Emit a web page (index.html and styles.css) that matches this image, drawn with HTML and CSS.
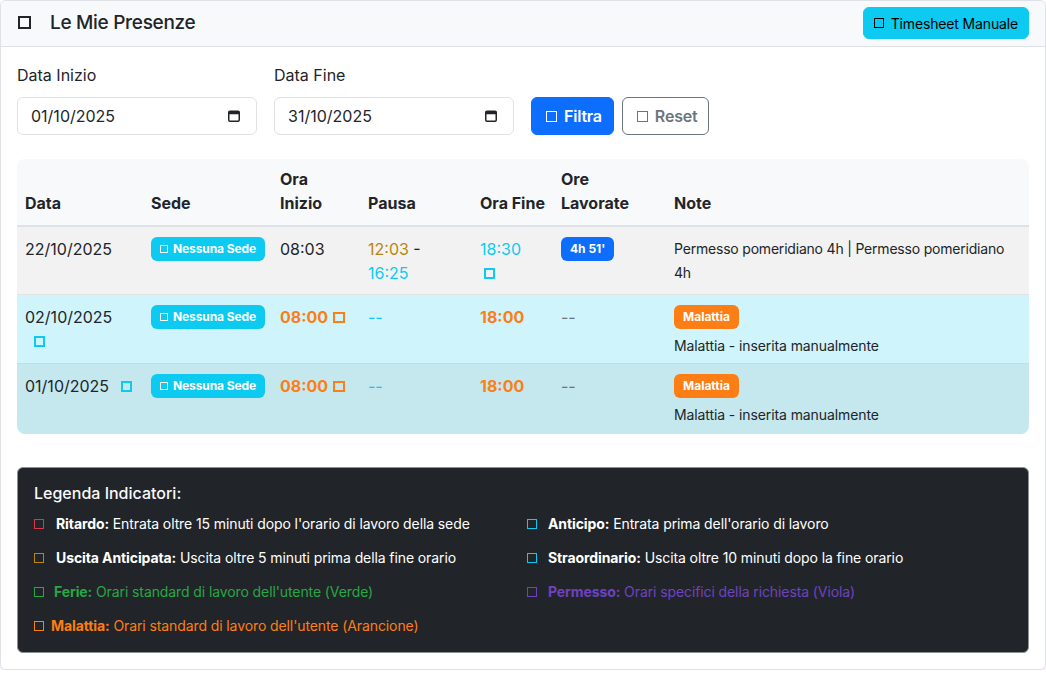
FILE: index.html
```html
<!DOCTYPE html>
<html lang="it">
<head>
<meta charset="utf-8">
<title>Le Mie Presenze</title>
<link rel="stylesheet" href="styles.css">
</head>
<body>
<div class="card">
  <div class="card-header">
    <h5 class="title"><span class="ico ico-title"></span>Le Mie Presenze</h5>
    <button class="btn btn-info"><span class="ico ico-btn-sm"></span>Timesheet Manuale</button>
  </div>
  <div class="card-body">
    <div class="filters">
      <div class="field">
        <label class="label">Data Inizio</label>
        <div class="date-input"><span>01/10/2025</span><svg class="cal" width="12" height="12" viewBox="0 0 12 12"><rect x="0.75" y="1.25" width="10.5" height="10" rx="1.2" fill="none" stroke="#212529" stroke-width="1.5"/><rect x="0.75" y="1.25" width="10.5" height="3" fill="#212529"/></svg></div>
      </div>
      <div class="field">
        <label class="label">Data Fine</label>
        <div class="date-input"><span>31/10/2025</span><svg class="cal" width="12" height="12" viewBox="0 0 12 12"><rect x="0.75" y="1.25" width="10.5" height="10" rx="1.2" fill="none" stroke="#212529" stroke-width="1.5"/><rect x="0.75" y="1.25" width="10.5" height="3" fill="#212529"/></svg></div>
      </div>
      <div class="actions">
        <button class="btn btn-primary"><span class="ico ico-btn"></span>Filtra</button>
        <button class="btn btn-outline"><span class="ico ico-btn"></span>Reset</button>
      </div>
    </div>

    <div class="table-wrap">
      <table class="grid">
        <colgroup>
          <col class="c-data"><col class="c-sede"><col class="c-inizio"><col class="c-pausa"><col class="c-fine"><col class="c-ore"><col class="c-note">
        </colgroup>
        <thead>
          <tr>
            <th>Data</th>
            <th>Sede</th>
            <th>Ora<br>Inizio</th>
            <th>Pausa</th>
            <th class="nowrap">Ora Fine</th>
            <th>Ore<br>Lavorate</th>
            <th>Note</th>
          </tr>
        </thead>
        <tbody>
          <tr class="row-striped">
            <td>22/10/2025</td>
            <td><span class="badge badge-info"><span class="ico ico-badge"></span>Nessuna Sede</span></td>
            <td>08:03</td>
            <td><span class="t-gold">12:03</span> -<br><span class="t-cyan">16:25</span></td>
            <td><span class="t-cyan">18:30</span><div class="icon-line"><span class="ico ico-cyan ico-indent"></span></div></td>
            <td><span class="badge badge-primary">4h 51'</span></td>
            <td class="note-small">Permesso pomeridiano 4h | Permesso pomeridiano 4h</td>
          </tr>
          <tr class="row-info">
            <td>02/10/2025<div class="icon-line"><span class="ico ico-cyan ico-date"></span></div></td>
            <td><span class="badge badge-info"><span class="ico ico-badge"></span>Nessuna Sede</span></td>
            <td><span class="t-orange-b">08:00</span><span class="ico ico-orange"></span></td>
            <td><span class="t-cyan">--</span></td>
            <td><span class="t-orange-b">18:00</span></td>
            <td><span class="t-muted">--</span></td>
            <td><div class="badge-line"><span class="badge badge-orange">Malattia</span></div><div class="note-text">Malattia - inserita manualmente</div></td>
          </tr>
          <tr class="row-info-striped">
            <td>01/10/2025<span class="ico ico-cyan ico-date-inline"></span></td>
            <td><span class="badge badge-info"><span class="ico ico-badge"></span>Nessuna Sede</span></td>
            <td><span class="t-orange-b">08:00</span><span class="ico ico-orange"></span></td>
            <td><span class="t-cyan">--</span></td>
            <td><span class="t-orange-b">18:00</span></td>
            <td><span class="t-muted">--</span></td>
            <td><div class="badge-line"><span class="badge badge-orange">Malattia</span></div><div class="note-text">Malattia - inserita manualmente</div></td>
          </tr>
        </tbody>
      </table>
    </div>

    <div class="legend">
      <h6 class="legend-title">Legenda Indicatori:</h6>
      <div class="legend-grid">
        <div class="legend-col">
          <div class="legend-item"><span class="ico ico-leg ico-red gap12"></span><strong>Ritardo:</strong> Entrata oltre 15 minuti dopo l'orario di lavoro della sede</div>
          <div class="legend-item"><span class="ico ico-leg ico-gold gap12"></span><strong>Uscita Anticipata:</strong> Uscita oltre 5 minuti prima della fine orario</div>
          <div class="legend-item t-green"><span class="ico ico-leg gap10"></span><strong>Ferie:</strong> Orari standard di lavoro dell'utente (Verde)</div>
          <div class="legend-item t-orange"><span class="ico ico-leg gap7"></span><strong>Malattia:</strong> Orari standard di lavoro dell'utente (Arancione)</div>
        </div>
        <div class="legend-col">
          <div class="legend-item"><span class="ico ico-leg ico-cyan gap11"></span><strong>Anticipo:</strong> Entrata prima dell'orario di lavoro</div>
          <div class="legend-item"><span class="ico ico-leg ico-cyan gap11"></span><strong>Straordinario:</strong> Uscita oltre 10 minuti dopo la fine orario</div>
          <div class="legend-item t-purple"><span class="ico ico-leg gap11"></span><strong>Permesso:</strong> Orari specifici della richiesta (Viola)</div>
        </div>
      </div>
    </div>
  </div>
</div>
</body>
</html>
```

FILE: styles.css
```css
* { box-sizing: border-box; }

html, body {
  margin: 0;
  background: #fff;
}

body {
  font-family: Inter, "Noto Sans", "Liberation Sans", sans-serif;
  font-size: 16px;
  line-height: 1.5;
  color: #212529;
}

/* generic "tofu" icon */
.ico {
  display: inline-block;
  width: 0.68em;
  height: 0.68em;
  border: 0.12em solid currentColor;
  vertical-align: baseline;
}

.card {
  width: 1046px;
  background: #fff;
  border: 1px solid #dee2e6;
  border-radius: 6px;
  box-shadow: 0 2px 4px rgba(0, 0, 0, 0.08);
}

.card-header {
  display: flex;
  align-items: center;
  justify-content: space-between;
  height: 46px;
  padding: 0 16px 0 17px;
  background: #f8f9fa;
  border-bottom: 1px solid #dee2e6;
  border-radius: 5px 5px 0 0;
}

.title {
  margin: 0;
  font-size: 19px;
  font-weight: 500;
  line-height: 1.2;
  letter-spacing: -0.3px;
  color: #212529;
}

.ico-title {
  width: 13px;
  height: 13px;
  border-width: 2px;
  margin-right: 19px;
}

.btn {
  font-family: inherit;
  display: inline-flex;
  align-items: center;
  border: 1px solid transparent;
  border-radius: 6px;
  cursor: pointer;
}

.btn-info {
  height: 32px;
  margin-top: -1px;
  padding: 0 10px 0 10px;
  font-size: 14px;
  letter-spacing: -0.15px;
  background: #0dcaf0;
  border-color: #0dcaf0;
  color: #000;
}

.ico-btn-sm {
  width: 10px;
  height: 10px;
  border-width: 1.5px;
  margin-right: 7px;
}

.card-body {
  padding: 16px;
}

.filters {
  display: flex;
  align-items: flex-end;
  gap: 17px;
  margin-bottom: 24px;
}

.field {
  width: 240px;
}

.label {
  display: block;
  line-height: 24px;
  margin-bottom: 10px;
}

.date-input {
  display: flex;
  align-items: center;
  justify-content: space-between;
  height: 38px;
  padding: 0 16px 0 13px;
  border: 1px solid #dee2e6;
  border-radius: 6px;
  background: #fff;
}

.cal { display: block; }

.actions {
  display: flex;
  gap: 8px;
}

.btn-primary,
.btn-outline {
  height: 38px;
  font-size: 16px;
  font-weight: 600;
  letter-spacing: -0.2px;
}

.btn-primary {
  padding: 0 11px 0 14px;
  background: #0d6efd;
  border-color: #0d6efd;
  color: #fff;
}

.btn-outline {
  padding: 0 11px 0 14px;
  background: #fff;
  border-color: #6c757d;
  color: #6c757d;
}

.ico-btn {
  width: 11px;
  height: 11px;
  border-width: 1.7px;
  margin-right: 7px;
}

/* table */
.table-wrap {
  border-radius: 8px;
  overflow: hidden;
  margin-bottom: 33px;
}

.grid {
  width: 100%;
  border-collapse: separate;
  border-spacing: 0;
  table-layout: fixed;
}

.c-data { width: 126px; }
.c-sede { width: 129px; }
.c-inizio { width: 88px; }
.c-pausa { width: 112px; }
.c-fine { width: 81px; }
.c-ore { width: 113px; }

.grid th {
  text-align: left;
  vertical-align: bottom;
  font-weight: 700;
  line-height: 24px;
  padding: 8px 8px 10px;
  background: #f8f9fa;
  border-bottom: 2px solid #dee2e6;
}

.nowrap { white-space: nowrap; }

.grid td {
  vertical-align: top;
  line-height: 24px;
  padding: 10px 8px 9px;
}

.row-striped td {
  background: #f2f2f2;
  border-bottom: 1px solid #e3e3e3;
}

.row-info td {
  background: #cff4fc;
  padding-bottom: 7px;
  border-bottom: 1px solid #bcdfe6;
}

.row-info-striped td {
  background: #c5e8ef;
  padding-bottom: 9px;
}

.icon-line { line-height: 24px; }

.ico-cyan { color: #0dcaf0; }
.ico-orange {
  color: #fd7e14;
  width: 12px;
  height: 11px;
  border-width: 2px;
  margin-left: 5px;
}
.ico-indent { width: 11px; height: 11px; border-width: 2px; margin-left: 4px; }
.ico-date { width: 11px; height: 11px; border-width: 2px; margin-left: 9px; }
.ico-date-inline { width: 11px; height: 11px; border-width: 2px; margin-left: 12px; }

.t-gold { color: #b8860b; }
.t-cyan { color: #0dcaf0; }
.t-muted { color: #6c757d; }
.t-orange-b { color: #fd7e14; font-weight: 700; }

.badge {
  display: inline-block;
  vertical-align: top;
  height: 24px;
  line-height: 24px;
  padding: 0 9px;
  font-size: 12px;
  font-weight: 700;
  color: #fff;
  border-radius: 6px;
  white-space: nowrap;
}

.badge-info { background: #0dcaf0; padding: 0 9px; letter-spacing: -0.1px; }
.badge-primary { background: #0d6efd; }
.badge-orange { background: #fd7e14; }

.ico-badge {
  width: 8px;
  height: 8px;
  border-width: 1.4px;
  margin-right: 5px;
}

.note-small {
  font-size: 14px;
  line-height: 24px;
  letter-spacing: -0.2px;
}

.badge-line {
  height: 24px;
  margin-bottom: 6px;
}

.note-text {
  font-size: 14px;
  line-height: 21px;
  letter-spacing: -0.1px;
}

/* legend */
.legend {
  background: #212529;
  color: #fff;
  border: 1px solid #8a9096;
  border-radius: 6px;
  padding: 16px;
}

.legend-title {
  margin: 0 0 10px;
  font-size: 16px;
  font-weight: 500;
  line-height: 1.2;
  color: #f8f9fa;
}

.legend-grid {
  display: grid;
  grid-template-columns: 493px 1fr;
  align-items: start;
}

.legend-item {
  font-size: 14px;
  line-height: 21px;
  margin-bottom: 13px;
  letter-spacing: -0.1px;
}

.legend-item:last-child { margin-bottom: 0; }

.legend-item strong { font-weight: 700; }

.ico-leg {
  width: 10px;
  height: 10px;
  border-width: 1.5px;
}

.gap12 { margin-right: 12px; }
.gap11 { margin-right: 11px; }
.gap10 { margin-right: 10px; }
.gap7 { margin-right: 7px; }

.ico-red { color: #dc3545; }
.ico-gold { color: #b8860b; }

.t-green { color: #28a745; }
.t-orange { color: #fd7e14; }
.t-purple { color: #6f42c1; }
```
